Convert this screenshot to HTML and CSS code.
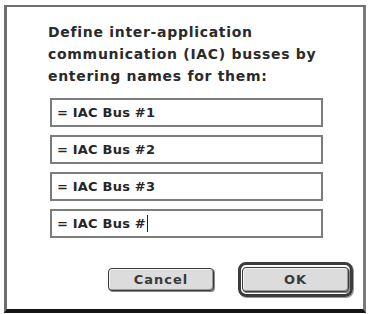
FILE: index.html
```html
<!DOCTYPE html>
<html>
<head>
<link rel="stylesheet" href="styles.css">
</head>
<body>
<div class="dialog">
    <p class="prompt">Define inter-application communication (IAC) busses by entering names for them:</p>

    <div class="fields">
        <div class="field">= IAC Bus #1</div>
        <div class="field">= IAC Bus #2</div>
        <div class="field">= IAC Bus #3</div>
        <div class="field">= IAC Bus #<span class="caret"></span></div>
    </div>

    <div class="buttons">
        <div class="button">Cancel</div>
        <div class="default-ring">
            <div class="button">OK</div>
        </div>
    </div>
</div>
</body>
</html>
```

FILE: styles.css
```css
body {
    margin: 0px;
    background-color: #ffffff;
    font-family: "DejaVu Sans", sans-serif;
    font-weight: bold;
    color: #262626;
}

.dialog {
    box-sizing: border-box;
    width: 362px;
    height: 308px;
    margin: 5px 0px 0px 4px;
    background-color: #ffffff;
    border-top: 2px solid #6e6e6e;
    border-left: 3px solid #6e6e6e;
    border-right: 3px solid #7a7a7a;
    border-bottom: 4px solid #151515;
    padding: 14px 0px 0px 41px;
}

.prompt {
    margin: 0px;
    width: 300px;
    font-size: 14px;
    letter-spacing: 0.7px;
    line-height: 22px;
    color: #2a2a2a;
}

.fields {
    display: flex;
    flex-direction: column;
    gap: 8px;
    margin-top: 11px;
    margin-left: 2px;
}

.field {
    box-sizing: border-box;
    width: 273px;
    height: 29px;
    border: 2px solid #7c7c7c;
    padding-left: 5px;
    font-size: 13px;
    letter-spacing: 0.2px;
    line-height: 25px;
    display: flex;
    align-items: center;
}

.caret {
    display: inline-block;
    width: 1px;
    height: 17px;
    margin-left: 1px;
    background-color: #222;
}

.buttons {
    display: flex;
    justify-content: flex-end;
    align-items: center;
    gap: 24px;
    margin-top: 24px;
    padding-right: 10px;
}

.button {
    box-sizing: border-box;
    width: 106px;
    height: 23px;
    background-color: #dcdcdc;
    border: 1px solid #3a3a3a;
    border-radius: 4px;
    box-shadow: inset 1px 1px 0px #f4f4f4, inset -1px -1px 0px #999, 1px 1px 0px #888;
    text-align: center;
    font-size: 13px;
    letter-spacing: 1px;
    line-height: 21px;
    color: #3a3a3a;
}

.default-ring {
    border: 3px solid #3c3c3c;
    border-radius: 8px;
    padding: 2px 1px;
    box-shadow: 1px 1px 0px #999;
}

.default-ring .button {
    width: 107px;
    height: 25px;
    line-height: 23px;
}
```
